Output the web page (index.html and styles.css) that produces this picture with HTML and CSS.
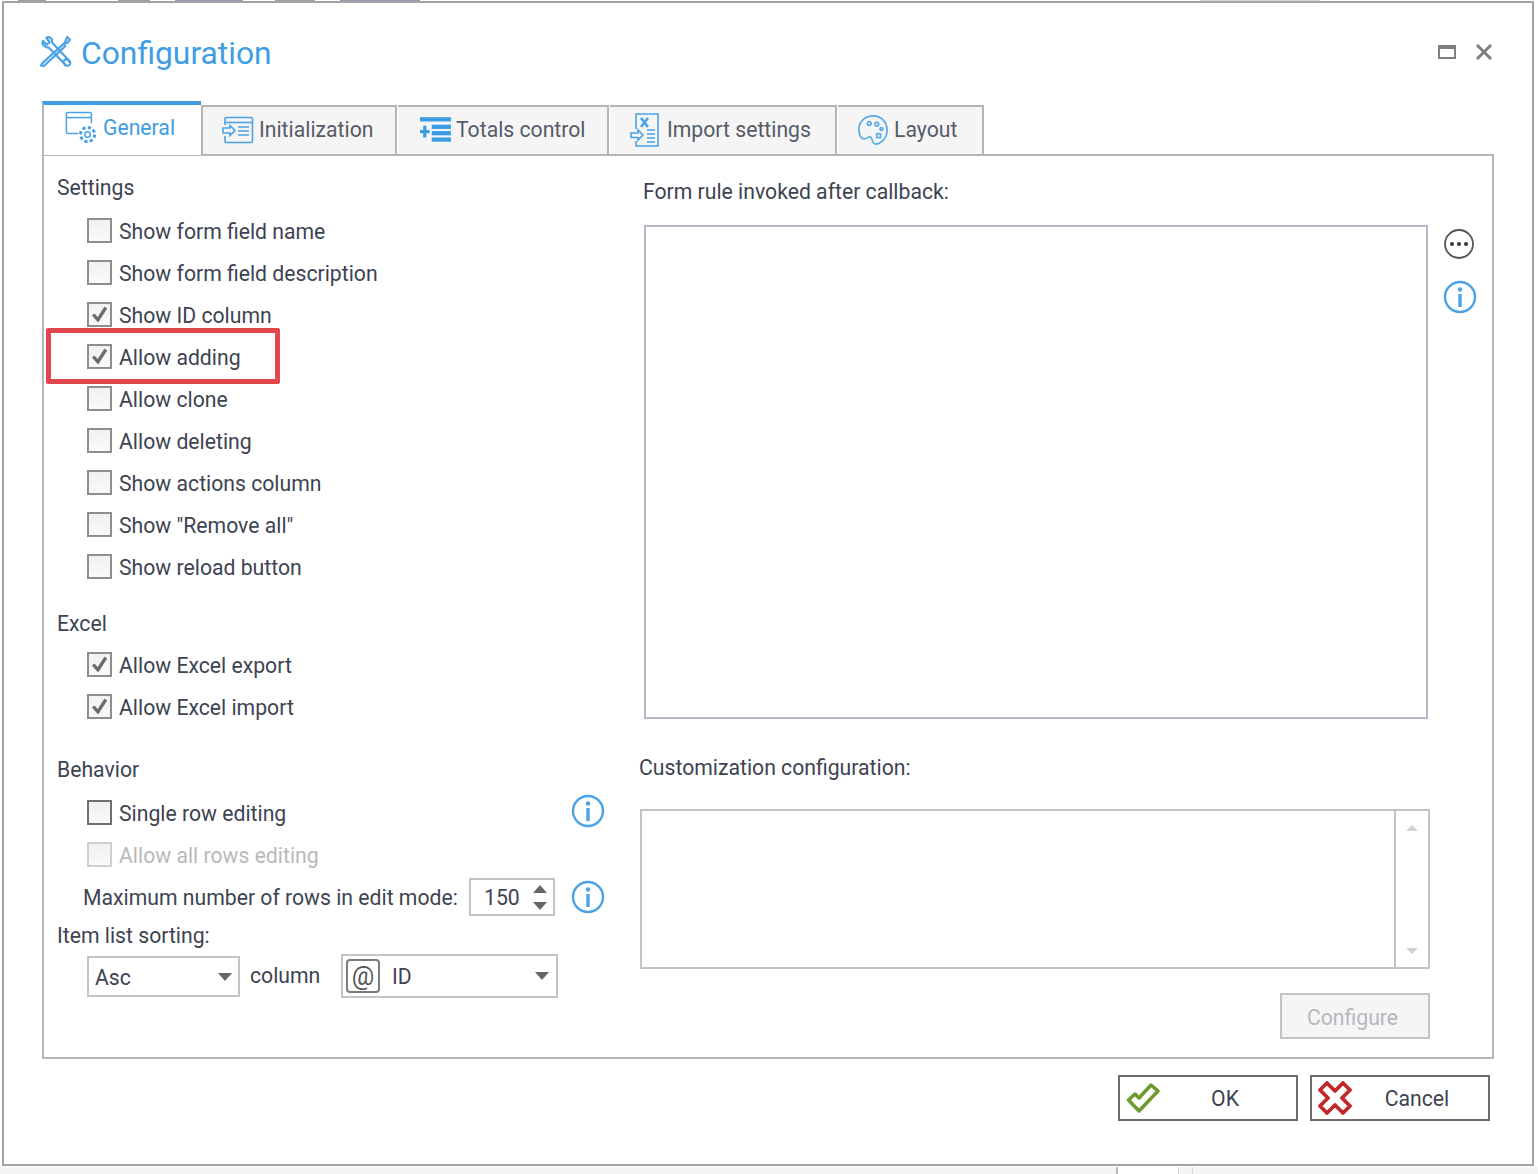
FILE: index.html
```html
<!DOCTYPE html>
<html lang="en">
<head>
<meta charset="utf-8">
<title>Configuration</title>
<link rel="stylesheet" href="styles.css">
</head>
<body>
<div class="backdrop-top"></div>
<div class="backdrop-bottom"></div>
<div class="dialog">
  <header class="titlebar">
    <svg class="title-icon" viewBox="0 0 34 34" fill="none" stroke="#4aa3e6" stroke-width="2.2" stroke-linejoin="round" stroke-linecap="round">
      <path d="M4 6.5 8 10.5 11 8 7.5 3.5C10.5 1.5 14 4 13.5 8L15 10 32 28C33 31 30.500 33 28 32L10 13.500C6.500 14 2.500 10.500 4 6.500Z"/>
      <path d="M29 2.500 32 5.500 28.500 9 26.500 8.500 3.500 29.500 2 32 5 32.500 27 12 26 10Z"/>
      <path d="M27 31.500 24.500 28 28 25 31.500 28"/>
    </svg>
    <h1 class="title">Configuration</h1>
    <div class="win-controls">
      <span class="win-max"></span>
      <svg class="win-close" viewBox="0 0 18 18" stroke="#7f7f7f" stroke-width="3"><path d="M2 2 16 16M16 2 2 16"/></svg>
    </div>
  </header>

  <nav class="tabs">
    <div class="tab tab-active">
      <svg class="tab-icon" viewBox="0 0 34 34" fill="none" stroke="#4aa3e6" stroke-width="1.6">
        <path d="M14 24H3Q1.500 24 1.500 22V3Q1.500 1.500 3 1.500H26Q28 1.500 28 3V13"/><path d="M1.500 7H28"/>
        <circle cx="24" cy="25" r="3"/><circle cx="24" cy="25" r="7.500" stroke-width="3.200" stroke-dasharray="3.400 2.500"/>
      </svg>
      <span>General</span>
    </div>
    <div class="tab">
      <svg class="tab-icon" viewBox="0 0 32 28" fill="none" stroke="#4aa3e6" stroke-width="1.600">
        <path d="M3 9V3Q3 1.500 5 1.500H29Q30.500 1.500 30.500 3V25Q30.500 26.500 29 26.500H5Q3 26.500 3 25V20"/><path d="M3 6.500H30"/>
        <path d="M1 12H8V9.500L13 14.500 8 19.500V17H1Z"/><path d="M16 11H27M16 15H27M16 19H27"/>
      </svg>
      <span>Initialization</span>
    </div>
    <div class="tab">
      <svg class="tab-icon" viewBox="0 0 30 24" fill="#3a9de4">
        <rect x="0" y="0" width="29" height="4"/><rect x="11" y="7" width="18" height="4"/><rect x="11" y="13" width="18" height="4"/><rect x="11" y="19" width="18" height="4"/>
        <path d="M3 8H6V12H9V15H6V19H3V15H0V12H3Z"/>
      </svg>
      <span>Totals control</span>
    </div>
    <div class="tab">
      <svg class="tab-icon tab-icon-tall" viewBox="0 0 30 34" fill="none" stroke="#4aa3e6" stroke-width="1.600">
        <path d="M6 16V1H28V33H6V28"/>
        <path d="M11 5 18 14M18 5 11 14" stroke-width="2.600"/>
        <path d="M1 20H8V17L13 22 8 27V24.500H1Z"/><path d="M17 17H25M17 21H25M17 25H25M17 29H25"/>
      </svg>
      <span>Import settings</span>
    </div>
    <div class="tab">
      <svg class="tab-icon tab-icon-tall" viewBox="0 0 34 34" fill="none" stroke="#5aabe6" stroke-width="1.800">
        <path d="M17 2C26 2 32 9 32 17 32 26 25 32 20 32 16 32 17 28 15 25 13 22 10 28 6 26 2 24 2 19 2 16 2 8 9 2 17 2Z"/>
        <circle cx="13" cy="10" r="2"/><circle cx="21" cy="11" r="2"/><circle cx="26" cy="16" r="1.500"/><rect x="21" y="21" width="4" height="4"/>
      </svg>
      <span>Layout</span>
    </div>
  </nav>

  <main class="panel">
    <section class="col-left">
      <div class="group group-settings">
        <div class="group-label">Settings</div>
        <label class="row"><span class="cb"></span>Show form field name</label>
        <label class="row"><span class="cb"></span>Show form field description</label>
        <label class="row"><span class="cb cb-on"><svg viewBox="0 0 20 20"><path d="M4 10 8.500 15 16 3.500"/></svg></span>Show ID column</label>
        <label class="row row-marked"><span class="cb cb-on"><svg viewBox="0 0 20 20"><path d="M4 10 8.500 15 16 3.500"/></svg></span>Allow adding<span class="marker"></span></label>
        <label class="row"><span class="cb"></span>Allow clone</label>
        <label class="row"><span class="cb"></span>Allow deleting</label>
        <label class="row"><span class="cb"></span>Show actions column</label>
        <label class="row"><span class="cb"></span>Show "Remove all"</label>
        <label class="row"><span class="cb"></span>Show reload button</label>
      </div>
      <div class="group group-excel">
        <div class="group-label">Excel</div>
        <label class="row"><span class="cb cb-on"><svg viewBox="0 0 20 20"><path d="M4 10 8.500 15 16 3.500"/></svg></span>Allow Excel export</label>
        <label class="row"><span class="cb cb-on"><svg viewBox="0 0 20 20"><path d="M4 10 8.500 15 16 3.500"/></svg></span>Allow Excel import</label>
      </div>
      <div class="group group-behavior">
        <div class="group-label">Behavior</div>
        <div class="row row-info">
          <label class="row-main"><span class="cb cb-dark"></span>Single row editing</label>
          <svg class="info info-first" viewBox="0 0 34 34"><circle cx="17" cy="17" r="15"/><circle class="info-dot" cx="17" cy="9.500" r="2.200"/><path d="M17 14V27"/></svg>
        </div>
        <label class="row row-disabled"><span class="cb cb-disabled"></span>Allow all rows editing</label>
        <div class="row row-info row-spin">
          <span class="spin-label">Maximum number of rows in edit mode:</span>
          <div class="spin"><span class="spin-value">150</span><span class="spin-arrows"><i class="arrow-up"></i><i class="arrow-down"></i></span></div>
          <svg class="info" viewBox="0 0 34 34"><circle cx="17" cy="17" r="15"/><circle class="info-dot" cx="17" cy="9.500" r="2.200"/><path d="M17 14V27"/></svg>
        </div>
        <div class="group-label group-label-sort">Item list sorting:</div>
        <div class="row row-sort">
          <div class="select select-asc"><span>Asc</span><i class="arrow-down arrow-big"></i></div>
          <span class="sort-word">column</span>
          <div class="select select-col"><span class="at">@</span><span class="select-col-text">ID</span><i class="arrow-down arrow-big"></i></div>
        </div>
      </div>
    </section>

    <section class="col-right">
      <div class="field-label field-label-rule">Form rule invoked after callback:</div>
      <div class="rule-row">
        <div class="rule-box"></div>
        <div class="rule-tools">
          <svg class="more" viewBox="0 0 32 32"><circle class="more-ring" cx="16" cy="16" r="14"/><circle cx="9" cy="16" r="2"/><circle cx="16" cy="16" r="2"/><circle cx="23" cy="16" r="2"/></svg>
          <svg class="info info-rule" viewBox="0 0 34 34"><circle cx="17" cy="17" r="15"/><circle class="info-dot" cx="17" cy="9.500" r="2.200"/><path d="M17 14V27"/></svg>
        </div>
      </div>
      <div class="field-label field-label-custom">Customization configuration:</div>
      <div class="custom-box">
        <div class="custom-scroll"><i class="arrow-up arrow-pale"></i><i class="arrow-down arrow-pale"></i></div>
      </div>
      <div class="configure-row"><button class="btn-configure" disabled>Configure</button></div>
    </section>
  </main>

  <footer class="actions">
    <button class="btn-action">
      <svg class="btn-icon" viewBox="0 0 34 30" fill="none"><path d="M2.500 17 9 11 13 15 25 2 32 8 13 28Z" stroke="#6f9a2c" stroke-width="3.500" stroke-linejoin="round"/></svg>
      <span>OK</span>
    </button>
    <button class="btn-action">
      <svg class="btn-icon btn-icon-x" viewBox="0 0 34 34" fill="none"><path d="M9 2 17 10 25 2 32 9 24 17 32 25 25 32 17 24 9 32 2 25 10 17 2 9Z" stroke="#c0282b" stroke-width="3.800" stroke-linejoin="round"/></svg>
      <span>Cancel</span>
    </button>
  </footer>
</div>
</body>
</html>
```
FILE: styles.css
```css
* { box-sizing: border-box; }
html, body { margin: 0; padding: 0; }
body {
  position: relative;
  width: 1538px;
  height: 1174px;
  overflow: hidden;
  background: #fff;
  font-family: Roboto, "Open Sans", sans-serif;
  font-size: 21.2px;
  color: #3d4352;
  padding: 1px 4px 0 2px;
}
.backdrop-top {
  position: absolute; left: 0; top: 0; width: 1538px; height: 2px;
  background:
    linear-gradient(#a0a0aa, #a0a0aa) 18px 0 / 28px 2px no-repeat,
    linear-gradient(#a0a0aa, #a0a0aa) 118px 0 / 32px 2px no-repeat,
    linear-gradient(#a098b4, #a098b4) 175px 0 / 68px 2px no-repeat,
    linear-gradient(#a0a0aa, #a0a0aa) 275px 0 / 40px 2px no-repeat,
    linear-gradient(#a098b4, #a098b4) 340px 0 / 80px 2px no-repeat,
    linear-gradient(#d4d4dc, #d4d4dc) 1200px 0 / 120px 2px no-repeat;
}
.backdrop-bottom {
  position: absolute; left: 0; top: 1167px; width: 1538px; height: 7px;
  background:
    linear-gradient(#b8b8c8, #b8b8c8) 1116px 0 / 2px 7px no-repeat,
    linear-gradient(#d8d8d8, #d8d8d8) 1178px 0 / 1px 7px no-repeat,
    linear-gradient(#d8d8d8, #d8d8d8) 1192px 0 / 1px 7px no-repeat,
    linear-gradient(#fff, #fff) 1118px 0 / 60px 7px no-repeat,
    #f5f5f5;
}
.dialog {
  position: relative;
  height: 1165px;
  border: 2px solid #a3a3a3;
  background: #fff;
  padding: 0 38px 0 38px;
  display: flex;
  flex-direction: column;
}
.titlebar {
  height: 98px;
  display: flex;
  align-items: flex-start;
  padding-top: 31px;
}
.title-icon { width: 33px; height: 34px; flex: none; margin-left: -3px; }
.title {
  margin: -2px 0 0 9px;
  font-size: 31.8px;
  font-weight: 400;
  line-height: 42px;
  color: #3f9de4;
}
.win-controls { margin-left: auto; display: flex; align-items: center; gap: 19px; padding-top: 9px; margin-right: 1px; }
.win-max { width: 18px; height: 14px; border: 2px solid #7f7f7f; border-top-width: 4px; }
.win-close { width: 18px; height: 18px; }

.tabs { display: flex; height: 54px; align-items: flex-start; position: relative; z-index: 1; margin-bottom: -1px; }
.tab {
  height: 51px;
  margin-top: 4px;
  display: flex;
  align-items: center;
  padding: 0 19px 2px;
  gap: 5px;
  background: #f5f5f5;
  border: 2px solid #b5b5b5;
  border-left-width: 0;
  color: #565b68;
  white-space: nowrap;
  margin-right: 1px;
}
.tab:nth-child(2) { width: 196px; border-left-width: 2px; padding-left: 19px; }
.tab:nth-child(3) { width: 211px; padding-left: 22px; gap: 4px; }
.tab:nth-child(4) { width: 227px; gap: 6px; }
.tab:nth-child(5) { width: 146px; gap: 5px; }
.tab-active {
  width: 159px;
  height: 54px;
  margin-top: 0;
  margin-right: 0;
  padding: 0 0 6px 21px;
  gap: 6px;
  background: #fff;
  border: 0;
  border-left: 2px solid #b5b5b5;
  border-top: 4px solid #3f9de4;
  color: #3f9de4;
}
.tab-icon { width: 32px; height: 28px; flex: none; }
.tab-active .tab-icon { height: 32px; }
.tab-icon-tall { height: 34px; }

.panel {
  height: 905px;
  border: 2px solid #b5b5b5;
  display: grid;
  grid-template-columns: 594px 1fr;
}
.col-left { padding: 11px 0 0 13px; }
.group-label { height: 38px; line-height: 42px; color: #3d4352; }
.row { display: flex; align-items: center; height: 42px; padding-top: 2px; position: relative; white-space: nowrap; }
.cb {
  width: 25px; height: 25px; flex: none;
  margin: -2px 7px 0 30px;
  border: 2px solid #8e8e8e;
  background: linear-gradient(#f0f0f0, #fafafa);
  display: flex; align-items: center; justify-content: center;
}
.cb svg { width: 21px; height: 21px; fill: none; stroke: #6b6b6b; stroke-width: 3.200; }
.cb-dark { border-color: #6f6f6f; }
.cb-disabled { border-color: #cfcfcf; }
.group-settings .group-label { margin-bottom: 4px; }
.group-excel { margin-top: 16px; }
.group-excel .group-label { margin-bottom: 2px; }
.group-behavior { margin-top: 22px; }
.group-behavior > .group-label:first-child { margin-bottom: 4px; }
.marker {
  position: absolute;
  left: -11px; top: -7px;
  width: 234px; height: 56px;
  border: 5px solid #e2474f;
  border-radius: 2px;
}
.row-info { justify-content: space-between; padding-right: 33px; }
.row-main { display: flex; align-items: center; }
.row-disabled { color: #b9b9b9; }
.info { width: 34px; height: 34px; flex: none; fill: none; stroke: #4aa3e6; stroke-width: 2.400; }
.info-first { margin-top: -4px; }
.info path { stroke-width: 3.400; }
.info .info-dot { fill: #4aa3e6; stroke: none; }
.spin-label { margin-left: 26px; }
.spin {
  width: 86px; height: 38px; flex: none;
  border: 2px solid #c4c4c4;
  display: flex; align-items: center; justify-content: space-between;
  padding: 0 6px 0 13px;
  margin-left: auto;
}
.spin-arrows { display: flex; flex-direction: column; gap: 9px; }
.arrow-up, .arrow-down { display: block; width: 0; height: 0; border-left: 7px solid transparent; border-right: 7px solid transparent; }
.arrow-up { border-bottom: 8px solid #666; }
.arrow-down { border-top: 8px solid #666; }
.arrow-big { margin-left: auto; }
.row-spin .info { margin-left: 16px; }
.group-label-sort { height: 34px; line-height: 38px; margin-bottom: 4px; }
.row-sort { padding-left: 30px; }
.select {
  height: 41px; flex: none;
  margin-top: -2px;
  border: 2px solid #c4c4c4;
  display: flex; align-items: center;
  padding: 2px 6px 0 6px;
}
.select-asc { width: 153px; }
.sort-word { flex: none; width: 101px; padding-left: 10px; margin-top: -4px; }
.select-col { width: 217px; height: 44px; padding: 0 7px 0 3px; }
.at {
  width: 34px; height: 34px;
  border: 2px solid #7a7a7a;
  border-radius: 4px;
  display: flex; align-items: center; justify-content: center;
  font-size: 25px; color: #555;
  margin-right: 12px;
}

.col-right { padding: 14px 0 0 0; }
.field-label { height: 42px; line-height: 44px; }
.field-label-rule { margin-left: 5px; }
.rule-row { display: flex; margin-top: 13px; margin-left: 6px; }
.rule-box { width: 784px; height: 494px; border: 2px solid #b8b8c8; flex: none; }
.rule-tools { display: flex; flex-direction: column; margin-left: 15px; padding-top: 3px; gap: 20px; }
.more { width: 32px; height: 32px; fill: #333; }
.more-ring { fill: none; stroke: #555; stroke-width: 1.800; }
.field-label-custom { margin-top: 27px; margin-left: 1px; }
.custom-box {
  width: 790px; height: 160px;
  margin-top: 21px; margin-left: 2px;
  border: 2px solid #c4c4c4;
  display: flex; justify-content: flex-end;
}
.custom-scroll {
  width: 34px;
  border-left: 2px solid #c4c4c4;
  display: flex; flex-direction: column; justify-content: space-between; align-items: center;
  padding: 14px 0 13px;
}
.arrow-pale { border-left-width: 6px; border-right-width: 6px; }
.arrow-pale.arrow-up { border-bottom: 6px solid #d0d0d0; }
.arrow-pale.arrow-down { border-top: 6px solid #d0d0d0; }
.configure-row { display: flex; justify-content: flex-end; width: 792px; margin-top: 24px; }
.btn-configure {
  width: 150px; height: 46px;
  border: 2px solid #c4c4c4;
  background: #f5f5f5;
  color: #b4b8c0;
  font: inherit;
  padding: 3px 5px 0 0;
}

.actions { display: flex; justify-content: flex-end; gap: 12px; margin-top: 16px; margin-right: 4px; }
.btn-action {
  width: 180px; height: 46px;
  border: 2px solid #6b6b6b;
  background: #fff;
  color: #3d4352;
  font: inherit;
  display: flex; align-items: center;
  padding: 0 0 0 6px;
  position: relative;
}
.btn-icon { width: 34px; height: 30px; flex: none; }
.btn-icon-x { height: 34px; }
.btn-action span { flex: 1; text-align: center; padding-left: 24px; padding-right: 30px; }
```
